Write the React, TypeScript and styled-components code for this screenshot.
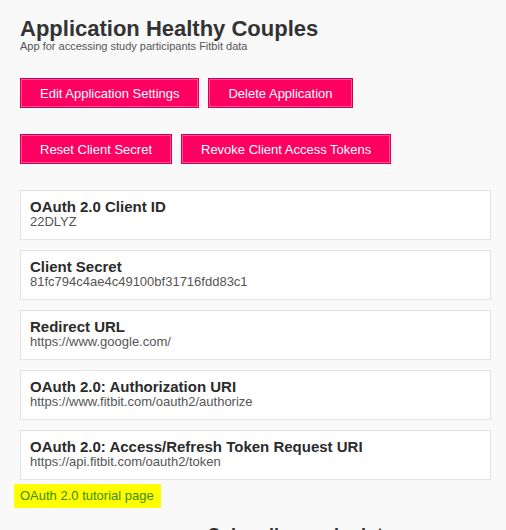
import React from 'react';
import styled, { createGlobalStyle } from 'styled-components';

const GlobalStyle = createGlobalStyle`
  html, body {
    margin: 0;
    padding: 0;
    background: #f9f9f9;
    font-family: "Liberation Sans", Arial, sans-serif;
    color: #333;
  }
`;

const Page = styled.div`
  padding: 18px 15px 0 20px;
  height: 530px;
  overflow: hidden;
  box-sizing: border-box;
`;

const Title = styled.h1`
  margin: 0;
  font-size: 22px;
  line-height: 22px;
  font-weight: bold;
  color: #333;
`;

const Subtitle = styled.p`
  margin: 0;
  font-size: 11px;
  line-height: 12px;
  color: #555;
`;

const ButtonRow = styled.div<{ $top: number }>`
  display: flex;
  gap: 9px;
  margin-top: ${(p) => p.$top}px;
`;

const ActionButton = styled.button`
  height: 30px;
  padding: 0 19px;
  font-family: "Liberation Sans", Arial, sans-serif;
  font-size: 13px;
  color: #fff;
  background: #ff0062;
  border: 1px solid #d5004f;
  box-shadow: inset 0 0 0 1px rgba(255, 150, 190, 0.55);
  cursor: pointer;
`;

const CardList = styled.div`
  display: flex;
  flex-direction: column;
  gap: 10px;
  margin-top: 26px;
`;

const Card = styled.div`
  box-sizing: border-box;
  height: 50px;
  background: #fff;
  border: 1px solid #e3e3e3;
  padding: 8px 9px 0;
`;

const Label = styled.div`
  font-size: 15px;
  line-height: 16px;
  font-weight: bold;
  color: #2b2b2b;
`;

const Value = styled.div`
  font-size: 13px;
  line-height: 14px;
  color: #555;
`;

const Tutorial = styled.a`
  display: inline-block;
  margin: 4px 0 0 -6px;
  padding: 5px 7px 5px 6px;
  background: #ffff00;
  color: #3c8a00;
  font-size: 13px;
  line-height: 14px;
  text-decoration: none;
`;

const SectionHeading = styled.h2`
  margin: 17px 0 0;
  text-align: center;
  font-size: 18px;
  font-weight: bold;
  color: #333;
  padding-left: 90px;
`;

const fields = [
  { label: 'OAuth 2.0 Client ID', value: '22DLYZ' },
  { label: 'Client Secret', value: '81fc794c4ae4c49100bf31716fdd83c1' },
  { label: 'Redirect URL', value: 'https://www.google.com/' },
  { label: 'OAuth 2.0: Authorization URI', value: 'https://www.fitbit.com/oauth2/authorize' },
  { label: 'OAuth 2.0: Access/Refresh Token Request URI', value: 'https://api.fitbit.com/oauth2/token' },
];

const App: React.FC = () => {
  return (
    <>
      <GlobalStyle />
      <Page>
        <Title>Application Healthy Couples</Title>
        <Subtitle>App for accessing study participants Fitbit data</Subtitle>

        <ButtonRow $top={26}>
          <ActionButton>Edit Application Settings</ActionButton>
          <ActionButton>Delete Application</ActionButton>
        </ButtonRow>
        <ButtonRow $top={26}>
          <ActionButton>Reset Client Secret</ActionButton>
          <ActionButton>Revoke Client Access Tokens</ActionButton>
        </ButtonRow>

        <CardList>
          {fields.map((f) => (
            <Card key={f.label}>
              <Label>{f.label}</Label>
              <Value>{f.value}</Value>
            </Card>
          ))}
        </CardList>

        <Tutorial href="#">OAuth 2.0 tutorial page</Tutorial>

        <SectionHeading>Subscriber endpoints</SectionHeading>
      </Page>
    </>
  );
};

export default App;
